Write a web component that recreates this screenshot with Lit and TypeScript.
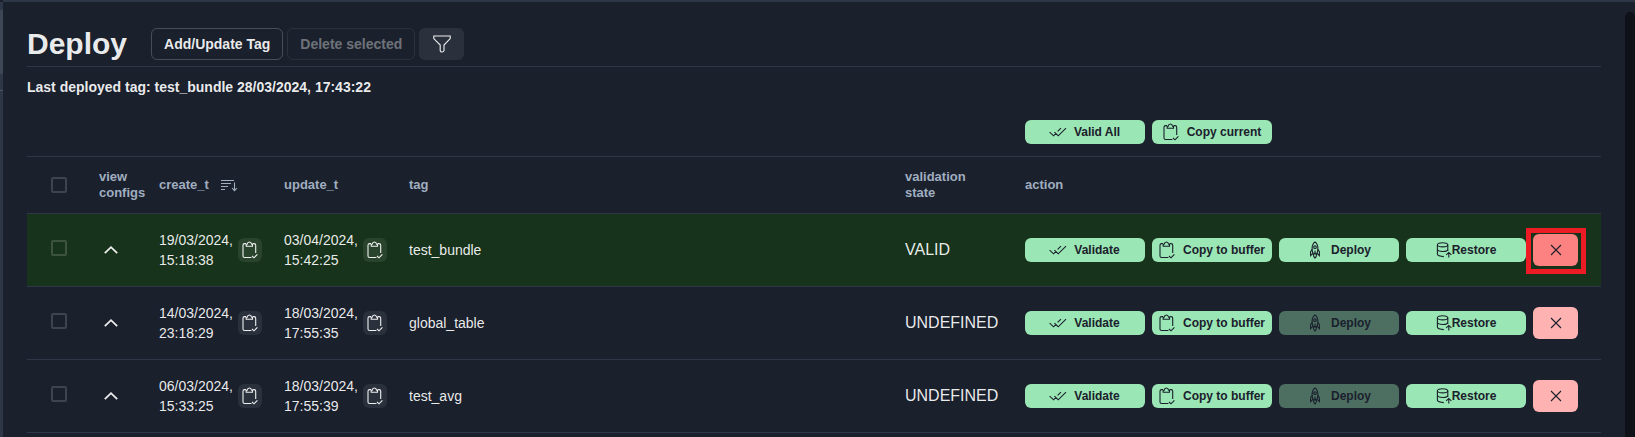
import { LitElement, html, css, nothing } from "lit";
import { customElement, state } from "lit/decorators.js";
import { classMap } from "lit/directives/class-map.js";

interface TagRow {
  created: [string, string];
  updated: [string, string];
  tag: string;
  validation: "VALID" | "UNDEFINED";
}

const clipboardIcon = html`<svg class="icon" width="16" height="18" viewBox="0 0 16 18" aria-hidden="true">
  <path d="M4 2.6H2.6Q1 2.6 1 4.2V15Q1 16.5 2.6 16.5H9.4M10.6 2.6H12Q13.7 2.6 13.7 4.2V12" />
  <path d="M4.2 5.2V3.2H5.2Q5.5 1 7.4 1T9.6 3.2H10.5V5.2Z" />
  <path d="M10 15L12 16.8L15.4 13.3" />
</svg>`;

const checksIcon = html`<svg class="icon" width="16" height="18" viewBox="0 0 16 18" aria-hidden="true">
  <path d="M-0.4 9.2L3.6 12.8L6.2 10M7.6 8.4L11 5.2M4.4 9.2L8.2 12.8L16 5.2" />
</svg>`;

const rocketIcon = html`<svg class="icon" width="16" height="18" viewBox="0 0 16 18" aria-hidden="true">
  <path d="M5.8 12.2Q4.4 6.4 5.9 3.4Q6.8 1.7 8 0.9Q9.2 1.7 10.1 3.4Q11.6 6.4 10.2 12.2Z" />
  <circle cx="8" cy="6.2" r="1.3" />
  <path d="M5.2 8.2L3.6 10.6V14.6L5.8 12.4M10.8 8.2L12.4 10.6V14.6L10.2 12.4M6.5 12.4Q6 15 8 17Q10 15 9.5 12.4M8 9.4V14" />
</svg>`;

const databaseIcon = html`<svg class="icon" width="16" height="18" viewBox="0 0 16 18" aria-hidden="true">
  <ellipse cx="6.6" cy="3.8" rx="5.2" ry="2.1" />
  <path d="M1.4 3.8V13.2Q1.8 15.4 7.8 15.6M11.8 3.8V10M1.4 8.4Q1.8 10.4 6.6 10.5T11.8 8.4" />
  <path d="M12.8 16.6V11.6M10.2 13.8L12.8 11.4L15.4 13.8" />
</svg>`;

const closeIcon = html`<svg class="icon" width="12" height="12" viewBox="0 0 12 12" aria-hidden="true">
  <path d="M1 1L11 11M11 1L1 11" />
</svg>`;

const chevronIcon = html`<svg class="icon bold" width="14" height="8" viewBox="0 0 14 8" aria-hidden="true">
  <path d="M0.8 7.2L7 1.2L13.2 7.2" />
</svg>`;

const sortIcon = html`<svg class="icon" width="17" height="13" viewBox="0 0 17 13" aria-hidden="true">
  <path d="M0 1.5H13M0 4.5H10M0 7.5H7M0 10.5H4M13.5 3.5V11.5M11 9L13.5 11.7L16 9" />
</svg>`;

const filterIcon = html`<svg class="icon" width="18" height="18" viewBox="0 0 18 18" aria-hidden="true">
  <path d="M0.8 1H17.2V3.6L11 10V15.6Q10.6 17 9 17T7.2 15.6V10L0.8 3.6Z" />
</svg>`;

@customElement("app-root")
export class AppRoot extends LitElement {
  @state() private selected = new Set<string>();

  private rows: TagRow[] = [
    { created: ["19/03/2024,", "15:18:38"], updated: ["03/04/2024,", "15:42:25"], tag: "test_bundle", validation: "VALID" },
    { created: ["14/03/2024,", "23:18:29"], updated: ["18/03/2024,", "17:55:35"], tag: "global_table", validation: "UNDEFINED" },
    { created: ["06/03/2024,", "15:33:25"], updated: ["18/03/2024,", "17:55:39"], tag: "test_avg", validation: "UNDEFINED" },
  ];

  static styles = css`
    :host {
      display: block;
      --bg: #1a202c;
      --line: #2d3748;
      --text: rgba(255, 255, 255, 0.92);
      font-family: "Liberation Sans", Arial, sans-serif;
      font-size: 14px;
      line-height: 20px;
      color: var(--text);
      background: var(--bg);
    }
    * {
      box-sizing: border-box;
    }
    .shell {
      display: grid;
      grid-template-columns: 3px minmax(0, 1fr) 10px;
      min-height: 100vh;
    }
    .rail {
      display: flex;
      flex-direction: column;
      background: var(--line);
    }
    .rail-top {
      height: 2px;
      background: var(--bg);
    }
    .rail-item {
      height: 64px;
      margin-top: 8px;
      background: #3d4856;
    }
    .rail-line {
      height: 1px;
      margin-top: 16px;
      background: #4a5566;
    }
    .page {
      padding: 26px 24px 0;
      border-top: 2px solid var(--line);
    }
    .track {
      display: flex;
      border-top: 2px solid var(--line);
      padding-top: 10px;
    }
    .thumb {
      flex: 1;
      border-radius: 5px 5px 0 0;
      background: #0e1117;
    }
    .header {
      display: flex;
      align-items: center;
      gap: 4px;
      padding-bottom: 6px;
      border-bottom: 1px solid var(--line);
    }
    h1 {
      margin: 0 20px 0 0;
      font-size: 30px;
      line-height: 32px;
      font-weight: 700;
    }
    button {
      display: inline-flex;
      align-items: center;
      justify-content: center;
      flex: none;
      margin: 0;
      padding: 0;
      border: 0;
      border-radius: 6px;
      font: inherit;
      color: inherit;
      cursor: pointer;
    }
    button:disabled {
      opacity: 0.4;
      cursor: not-allowed;
    }
    .outline {
      height: 32px;
      padding: 0 12px;
      border: 1px solid rgba(255, 255, 255, 0.2);
      background: transparent;
      font-weight: 700;
    }
    .filter {
      width: 45px;
      height: 32px;
      background: rgba(255, 255, 255, 0.08);
    }
    .icon {
      display: block;
      flex: none;
      overflow: visible;
      fill: none;
      stroke: currentColor;
      stroke-width: 1.1;
    }
    .bold {
      stroke-width: 1.8;
    }
    .last {
      margin: 0;
      padding: 10px 0 23px;
      font-weight: 700;
    }
    .toolbar {
      display: flex;
      justify-content: flex-end;
      padding-bottom: 12px;
      border-bottom: 1px solid var(--line);
    }
    .toolbar .actions {
      width: 584px;
      padding-left: 8px;
    }
    .actions {
      display: flex;
      align-items: center;
      gap: 7px;
    }
    .action {
      gap: 8px;
      width: 120px;
      height: 24px;
      background: #9ae6b4;
      color: #1a202c;
      font-size: 12px;
      font-weight: 700;
    }
    .tight {
      gap: 0;
    }
    .marked {
      position: relative;
      display: flex;
    }
    .marker {
      position: absolute;
      inset: -6px -8px -8px -7px;
      border: 5px solid #ed1c24;
      pointer-events: none;
    }
    .remove {
      width: 45px;
      height: 32px;
      background: #feb2b2;
      color: #1a202c;
    }
    .remove.hot {
      background: #fc8181;
    }
    table {
      width: 100%;
      table-layout: fixed;
      border-collapse: separate;
      border-spacing: 0;
    }
    .c-check { width: 64px; }
    .c-view { width: 60px; }
    .c-time { width: 125px; }
    .c-state { width: 120px; }
    .c-action { width: 584px; }
    th,
    td {
      padding: 0 0 0 8px;
      border-bottom: 1px solid var(--line);
      text-align: left;
      vertical-align: middle;
    }
    th {
      height: 57px;
      font-size: 13px;
      line-height: 16px;
      font-weight: 700;
      color: #a0aec0;
    }
    td {
      height: 73px;
    }
    th.state-head {
      padding-right: 24px;
    }
    .check {
      padding: 0 0 0 24px;
    }
    td.check {
      padding-bottom: 4px;
    }
    .deployed {
      background: #18331b;
    }
    .sort {
      display: flex;
      align-items: center;
      gap: 12px;
    }
    .box {
      appearance: none;
      display: block;
      width: 16px;
      height: 16px;
      margin: 0;
      border: 2px solid rgba(255, 255, 255, 0.16);
      border-radius: 2px;
    }
    .box:checked {
      background: #90cdf4;
    }
    .expand {
      width: 24px;
      height: 24px;
      background: transparent;
    }
    .time {
      display: flex;
      align-items: center;
      gap: 5px;
    }
    .copy {
      width: 24px;
      height: 24px;
      background: rgba(255, 255, 255, 0.08);
    }
    .stamp {
      display: block;
      white-space: nowrap;
    }
    .state {
      font-size: 16px;
    }
  `;

  private toggle(tag: string) {
    const next = new Set(this.selected);
    next.has(tag) ? next.delete(tag) : next.add(tag);
    this.selected = next;
  }

  private toggleAll() {
    this.selected = this.selected.size === this.rows.length ? new Set() : new Set(this.rows.map((r) => r.tag));
  }

  private timeCell(stamp: [string, string]) {
    return html`<div class="time">
      <time><span class="stamp">${stamp[0]}</span><span class="stamp">${stamp[1]}</span></time>
      <button class="copy" aria-label="Copy time">${clipboardIcon}</button>
    </div>`;
  }

  private row(r: TagRow) {
    const valid = r.validation === "VALID";
    return html`<tr class=${classMap({ deployed: valid })}>
      <td class="check">
        <input class="box" type="checkbox" aria-label=${`Select ${r.tag}`}
          .checked=${this.selected.has(r.tag)} @change=${() => this.toggle(r.tag)} />
      </td>
      <td><button class="expand" aria-label="View configs">${chevronIcon}</button></td>
      <td>${this.timeCell(r.created)}</td>
      <td>${this.timeCell(r.updated)}</td>
      <td>${r.tag}</td>
      <td class="state">${r.validation}</td>
      <td>
        <div class="actions">
          <button class="action">${checksIcon}<span>Validate</span></button>
          <button class="action">${clipboardIcon}<span>Copy to buffer</span></button>
          <button class="action" ?disabled=${!valid}>${rocketIcon}<span>Deploy</span></button>
          <button class="action tight">${databaseIcon}<span>Restore</span></button>
          <div class="marked">
            <button class=${classMap({ remove: true, hot: valid })} aria-label="Delete">${closeIcon}</button>
            ${valid ? html`<div class="marker"></div>` : nothing}
          </div>
        </div>
      </td>
    </tr>`;
  }

  render() {
    const all = this.selected.size === this.rows.length;
    return html`<div class="shell">
      <div class="rail">
        <div class="rail-top"></div>
        <div class="rail-item"></div>
        <div class="rail-line"></div>
      </div>
      <main class="page">
        <header class="header">
          <h1>Deploy</h1>
          <button class="outline">Add/Update Tag</button>
          <button class="outline" ?disabled=${this.selected.size === 0}>Delete selected</button>
          <button class="filter" aria-label="Filter">${filterIcon}</button>
        </header>
        <p class="last">Last deployed tag: test_bundle 28/03/2024, 17:43:22</p>
        <div class="toolbar">
          <div class="actions">
            <button class="action">${checksIcon}<span>Valid All</span></button>
            <button class="action">${clipboardIcon}<span>Copy current</span></button>
          </div>
        </div>
        <table>
          <colgroup>
            <col class="c-check" /><col class="c-view" /><col class="c-time" /><col class="c-time" />
            <col /><col class="c-state" /><col class="c-action" />
          </colgroup>
          <thead>
            <tr>
              <th class="check">
                <input class="box" type="checkbox" aria-label="Select all" .checked=${all} @change=${this.toggleAll} />
              </th>
              <th>view configs</th>
              <th><div class="sort">create_t ${sortIcon}</div></th>
              <th>update_t</th>
              <th>tag</th>
              <th class="state-head">validation state</th>
              <th>action</th>
            </tr>
          </thead>
          <tbody>${this.rows.map((r) => this.row(r))}</tbody>
        </table>
      </main>
      <div class="track"><div class="thumb"></div></div>
    </div>`;
  }
}
